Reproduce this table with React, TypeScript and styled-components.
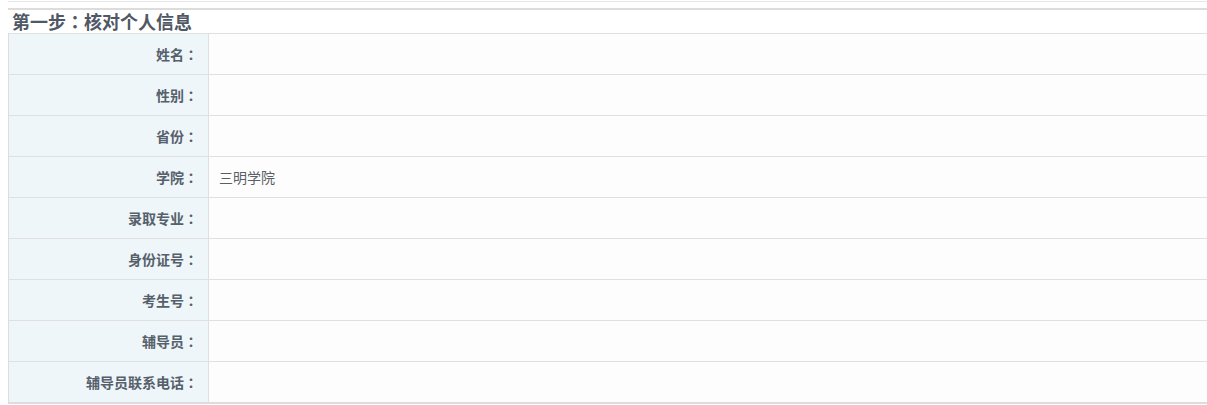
import React from "react";
import styled, { createGlobalStyle } from "styled-components";

const GlobalStyle = createGlobalStyle`
  html, body {
    margin: 0;
    padding: 0;
    background: #ffffff;
  }
  body {
    font-family: "Noto Sans CJK SC", "Noto Sans", "Liberation Sans", sans-serif;
  }
`;

const Page = styled.div`
  padding-left: 8px;
`;

const TopRule = styled.div`
  margin-top: 1px;
  height: 1px;
  background-color: #e6e6e6;
`;

const SectionRule = styled.div`
  margin-top: 6px;
  height: 2px;
  background-color: #dcdcdc;
`;

const Title = styled.h3`
  margin: 0;
  padding-left: 4px;
  font-size: 18px;
  line-height: 23px;
  font-weight: bold;
  color: #4f5864;
`;

// full-width colon drawn centred, as in the original page
const Colon = styled.span`
  font-family: "Noto Sans CJK TC", "Noto Sans CJK SC", sans-serif;
`;

const InfoTable = styled.div`
  border-left: 1px solid #dddddd;
  border-bottom: 2px solid #dddddd;
`;

const Row = styled.div`
  display: grid;
  grid-template-columns: 200px 1fr;
  height: 41px;
  border-top: 1px solid #e0e0e0;
  box-sizing: border-box;
`;

const LabelCell = styled.div`
  display: flex;
  align-items: center;
  justify-content: flex-end;
  padding-right: 10px;
  background-color: #eef6fa;
  border-right: 1px solid #e0e0e0;
  font-size: 14px;
  font-weight: bold;
  color: #56606b;
`;

const ValueCell = styled.div`
  display: flex;
  align-items: center;
  padding-left: 10px;
  background-color: #fdfdfd;
  font-size: 14px;
  color: #5a5f66;
`;

interface Field {
  label: string;
  value?: string;
}

const fields: Field[] = [
  { label: "姓名" },
  { label: "性别" },
  { label: "省份" },
  { label: "学院", value: "三明学院" },
  { label: "录取专业" },
  { label: "身份证号" },
  { label: "考生号" },
  { label: "辅导员" },
  { label: "辅导员联系电话" },
];

export default function App(): JSX.Element {
  return (
    <>
      <GlobalStyle />
      <Page>
        <TopRule />
        <SectionRule />
        <Title>
          第一步<Colon>：</Colon>核对个人信息
        </Title>
        <InfoTable>
          {fields.map((f) => (
            <Row key={f.label}>
              <LabelCell>
                {f.label}
                <Colon>：</Colon>
              </LabelCell>
              <ValueCell>{f.value}</ValueCell>
            </Row>
          ))}
        </InfoTable>
      </Page>
    </>
  );
}
